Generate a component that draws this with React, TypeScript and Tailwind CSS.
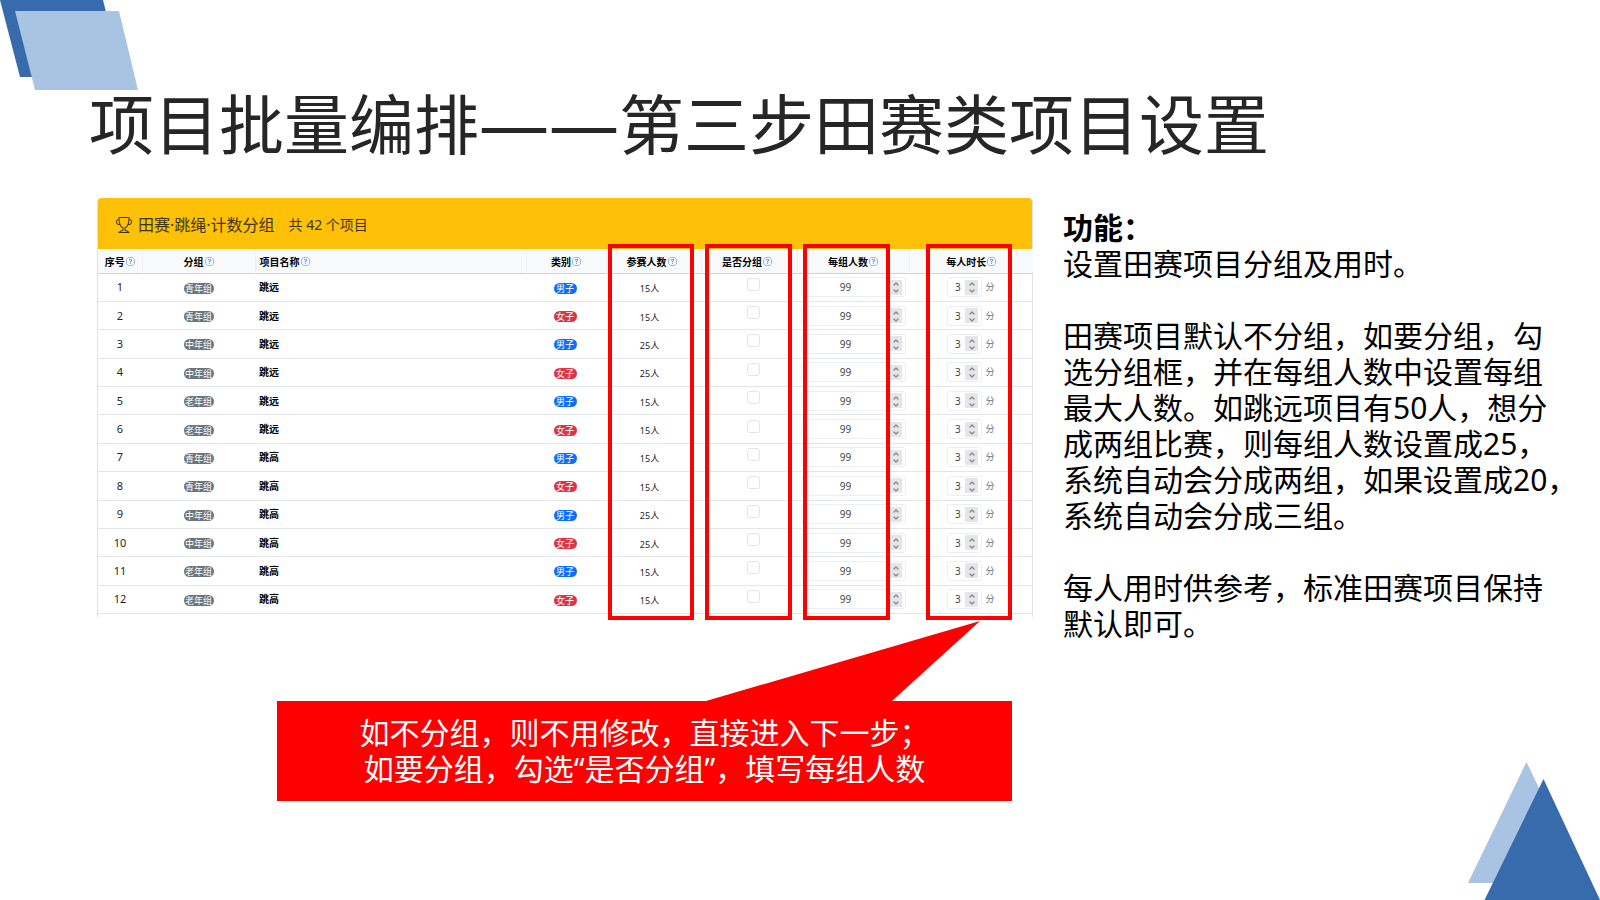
import { ChevronDown, ChevronUp } from 'lucide-react';
import { BsQuestionCircle, BsTrophy } from 'react-icons/bs';

interface EventRow {
  id: number;
  group: string;
  name: string;
  gender: string;
  entrants: number;
}

const groups = ['青年组', '中年组', '老年组'];

// Every event is listed for each age group, men first and women second
const rows: EventRow[] = ['跳远', '跳高'].flatMap((name, eventIndex) =>
  groups.flatMap((group, groupIndex) =>
    ['男子', '女子'].map((gender, genderIndex) => ({
      id: eventIndex * 6 + groupIndex * 2 + genderIndex + 1,
      group,
      name,
      gender,
      entrants: group === '中年组' ? 25 : 15,
    }))
  )
);

const columns = [
  { label: '序号', col: 'w-[44px]' },
  { label: '分组', col: 'w-[113px]' },
  { label: '项目名称', col: 'w-[271px]' },
  { label: '类别', col: 'w-[80px]' },
  { label: '参赛人数', col: 'w-[95px]' },
  { label: '是否分组', col: 'w-[96px]' },
  { label: '每组人数', col: 'w-[112px]' },
  { label: '每人时长', col: 'w-[124px]' },
];

function Stepper({ label }: { label: string }) {
  return (
    <span className="flex h-[15px] shrink-0 flex-col items-center justify-center bg-[#e6e6ea] text-[#888]">
      <button type="button" aria-label={`${label}增加`} className="h-[7px] w-[13px]">
        <ChevronUp className="mx-auto h-2 w-2" strokeWidth={4} />
      </button>
      <button type="button" aria-label={`${label}减少`} className="h-[7px] w-[13px]">
        <ChevronDown className="mx-auto h-2 w-2" strokeWidth={4} />
      </button>
    </span>
  );
}

function EventTable() {
  return (
    <table className="h-[365px] w-full table-fixed border-collapse text-[10px] leading-3 text-[#212529]">
      <colgroup>
        {columns.map((c) => (
          <col key={c.label} className={c.col} />
        ))}
      </colgroup>
      <thead>
        <tr className="h-6 border-b border-[#cfd2d6] bg-[#f8f9fa] text-black">
          {columns.map((c) => (
            <th
              key={c.label}
              scope="col"
              className="border-r border-[#f0f1f3] p-0 pt-[2px] font-bold last:border-r-0 nth-3:pl-1 nth-3:text-left nth-5:pr-1 nth-6:pr-1"
            >
              <span className="inline-flex items-center gap-px whitespace-nowrap">
                {c.label}
                <BsQuestionCircle className="h-[9px] w-[9px] text-[#3b7cf0]" />
              </span>
            </th>
          ))}
        </tr>
      </thead>
      <tbody>
        {rows.map((row) => (
          <tr key={row.id} className="border-b border-[#e3e6e9] text-center">
            <td className="p-0 text-[11px]">{row.id}</td>
            <td className="p-0 pt-[2px]">
              <span className="mx-auto block h-[11px] w-[30px] rounded-full bg-[#6c757d] text-[9px] leading-[11px] text-white">
                {row.group}
              </span>
            </td>
            <td className="p-0 pl-1 text-left font-bold text-black">{row.name}</td>
            <td className="p-0 pt-[2px] pr-[2px]">
              <span
                className={`mx-auto block h-[11px] w-[23px] rounded-full text-[9px] leading-[11px] text-white ${
                  row.gender === '男子' ? 'bg-[#0d6efd]' : 'bg-[#dc3545]'
                }`}
              >
                {row.gender}
              </span>
            </td>
            <td className="p-0 pt-1 pr-2 text-[9px]">{row.entrants}人</td>
            <td className="p-0 pb-[6px] pl-2">
              <input
                type="checkbox"
                aria-label={`第${row.id}项是否分组`}
                className="mx-auto block h-[13px] w-[13px] appearance-none rounded-[3px] border border-[#e2e4e7] bg-white"
              />
            </td>
            <td className="p-0 pr-[3px] pl-1">
              <span className="flex h-5 items-center rounded-[3px] border border-[#eceef0] bg-white pr-[3px]">
                <input
                  type="text"
                  inputMode="numeric"
                  defaultValue="99"
                  aria-label={`第${row.id}项每组人数`}
                  className="w-full min-w-0 bg-transparent text-center text-[10px] text-[#444]"
                />
                <Stepper label={`第${row.id}项每组人数`} />
              </span>
            </td>
            <td className="p-0">
              <span className="flex items-center justify-center gap-[3px] text-[9px] text-[#6c757d]">
                <span className="flex h-5 w-[35px] items-center rounded-[3px] border border-[#eceef0] bg-white pr-[3px]">
                  <input
                    type="text"
                    inputMode="numeric"
                    defaultValue="3"
                    aria-label={`第${row.id}项每人时长`}
                    className="w-full min-w-0 bg-transparent pl-[2px] text-center text-[10px] text-[#444]"
                  />
                  <Stepper label={`第${row.id}项每人时长`} />
                </span>
                分
              </span>
            </td>
          </tr>
        ))}
      </tbody>
    </table>
  );
}

/* Red frames laid over the four columns the notes talk about */
function Highlights() {
  return (
    <div className="pointer-events-none absolute inset-x-0 top-[46px] -bottom-[3px] grid grid-cols-[511fr_86fr_11fr_87fr_11fr_87fr_36fr_86fr_21fr]">
      <div className="col-start-2 border-4 border-[#fe0000]" />
      <div className="col-start-4 border-4 border-[#fe0000]" />
      <div className="col-start-6 border-4 border-[#fe0000]" />
      <div className="col-start-8 border-4 border-[#fe0000]" />
    </div>
  );
}

function Callout() {
  return (
    <div className="mt-1 grid grid-cols-[180fr_735fr_21fr]">
      <div className="col-start-2">
        <svg viewBox="0 0 735 80" preserveAspectRatio="none" className="block h-20 w-full" aria-hidden="true">
          <path d="M429 80 L703 0 L615 80 Z" fill="#fe0000" />
        </svg>
        <p className="bg-[#fe0000] py-[14px] text-center text-[30px] leading-9 whitespace-nowrap text-white">
          如不分组，则不用修改，直接进入下一步；
          <br />
          如要分组，勾选“是否分组”，填写每组人数
        </p>
      </div>
    </div>
  );
}

function Notes() {
  return (
    <aside className="w-[515px] shrink-0 pt-3 text-[30px] leading-9 whitespace-nowrap text-black">
      <h2 className="font-bold">功能：</h2>
      <p>设置田赛项目分组及用时。</p>
      <p className="mt-9">
        田赛项目默认不分组，如要分组，勾
        <br />
        选分组框，并在每组人数中设置每组
        <br />
        最大人数。如跳远项目有50人，想分
        <br />
        成两组比赛，则每组人数设置成25，
        <br />
        系统自动会分成两组，如果设置成20，
        <br />
        系统自动会分成三组。
      </p>
      <p className="mt-9">
        每人用时供参考，标准田赛项目保持
        <br />
        默认即可。
      </p>
    </aside>
  );
}

export default function App() {
  return (
    <main
      lang="zh-CN"
      className="relative min-h-screen overflow-hidden bg-white pl-[97px] pr-[22px] pt-[85px] font-['Noto_Sans','Noto_Sans_CJK_SC',sans-serif]"
    >
      {/* Corner decorations */}
      <svg width="140" height="92" className="absolute top-0 left-0" aria-hidden="true">
        <path d="M0 0 H103 L122 77 H20 Z" fill="#376bac" />
        <path d="M15 11 H119 L138 90 H35 Z" fill="#a9c3e2" />
      </svg>
      <svg width="132" height="138" className="absolute right-0 bottom-0" aria-hidden="true">
        <path d="M58.500 0 L117 121 H0 Z" fill="#a9c3e2" />
        <path d="M75.500 17 L132 138 H16.500 Z" fill="#376bac" />
      </svg>

      <h1 className="relative -ml-2 font-['Noto_Sans_CJK_SC',sans-serif] text-[65px] leading-[72px] whitespace-nowrap text-[#262626]">
        项目批量编排
        <span className="font-['Open_Sans',sans-serif] text-[70px]">——</span>
        第三步田赛类项目设置
      </h1>

      <div className="mt-10 flex items-start gap-[30px]">
        <div className="min-w-0 flex-1">
          <section className="relative">
            <div className="rounded-t-[4px] border-x border-[#dfe1e4] pb-[3px]">
              <header className="flex h-[51px] items-center rounded-t-[4px] bg-[#ffc107] pt-[2px] pl-[18px] text-[#3d3413]">
                <BsTrophy className="mr-[6px] h-4 w-4" />
                <h2 className="text-base">田赛·跳绳·计数分组</h2>
                <span className="ml-[14px] text-sm">共 42 个项目</span>
              </header>
              <EventTable />
            </div>
            <Highlights />
          </section>
          <Callout />
        </div>
        <Notes />
      </div>
    </main>
  );
}
